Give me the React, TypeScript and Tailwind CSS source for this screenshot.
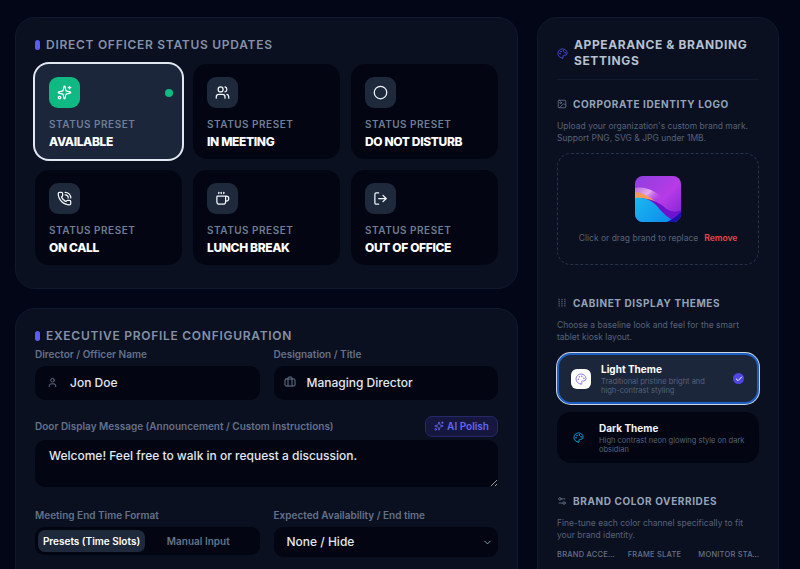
import {
  Briefcase,
  Check,
  ChevronDown,
  Circle,
  Coffee,
  Image,
  LogOut,
  Palette,
  PhoneCall,
  Settings2,
  Sparkles,
  User,
  Users,
} from "lucide-react";

const presets = [
  { title: "AVAILABLE", icon: Sparkles, active: true },
  { title: "IN MEETING", icon: Users },
  { title: "DO NOT DISTURB", icon: Circle },
  { title: "ON CALL", icon: PhoneCall },
  { title: "LUNCH BREAK", icon: Coffee },
  { title: "OUT OF OFFICE", icon: LogOut },
];

function PanelHeading({ children }: { children: string }) {
  return (
    <div className="flex items-center gap-1.5">
      <span className="h-[10px] w-[5px] rounded-full bg-[#5b5bf6]" />
      <h2 className="text-[12px] leading-4 font-semibold tracking-[0.06em] text-[#8491a8]">{children}</h2>
    </div>
  );
}

function FieldLabel({ children }: { children: string }) {
  return <label className="block text-[10px] leading-[14px] font-semibold text-[#64718a]">{children}</label>;
}

function SectionHeading({ icon, children }: { icon: React.ReactNode; children: string }) {
  return (
    <div className="flex items-center gap-[6px]">
      {icon}
      <h3 className="text-[10px] leading-[14px] font-bold tracking-[0.06em] text-[#94a3b8]">{children}</h3>
    </div>
  );
}

function ThemeIcon() {
  return (
    <svg viewBox="0 0 24 24" className="h-[10px] w-[10px] text-[#64748b]" fill="none" stroke="currentColor" strokeWidth="2.4" strokeDasharray="3 1.6">
      <path d="M5 2v20M12 2v20M19 2v20" />
    </svg>
  );
}

function BrandMark() {
  return (
    <svg viewBox="0 0 46 46" className="h-[46px] w-[46px] rounded-[8px]">
      <defs>
        <linearGradient id="mark-sky" x1="0" y1="0" x2="1" y2="1">
          <stop offset="0" stopColor="#8e3fe0" />
          <stop offset="0.55" stopColor="#b63be6" />
          <stop offset="1" stopColor="#7b1fd6" />
        </linearGradient>
        <linearGradient id="mark-glow" x1="0" y1="0" x2="1" y2="0.4">
          <stop offset="0" stopColor="#f2b7d8" stopOpacity="0.4" />
          <stop offset="0.5" stopColor="#f4c9ec" stopOpacity="0.8" />
          <stop offset="1" stopColor="#c24bea" stopOpacity="0" />
        </linearGradient>
        <linearGradient id="mark-water" x1="0" y1="0" x2="1" y2="0.6">
          <stop offset="0" stopColor="#1cb8f2" />
          <stop offset="1" stopColor="#0c8fea" />
        </linearGradient>
      </defs>
      <rect width="46" height="46" fill="url(#mark-sky)" />
      <path d="M0 12C12 10 20 16 32 24C24 24 14 22 0 22Z" fill="url(#mark-glow)" />
      <path d="M0 16C8 17 16 21 22 27C14 27 6 24 0 24Z" fill="#f59a5a" />
      <path d="M0 22C12 22 20 24 28 30C34 36 40 37 46 34V46H0Z" fill="#6d13cf" />
      <path d="M0 22C10 21 16 24 22 30C28 38 34 42 40 46H0Z" fill="url(#mark-water)" />
      <path d="M32 46C38 43 42 40 46 36V46Z" fill="#1a0fb0" />
    </svg>
  );
}

export default function App() {
  return (
    <div className="flex h-[569px] w-[800px] items-start gap-[19px] overflow-hidden bg-[#020617] pt-[17px] pl-[15px] font-['Inter',sans-serif]">
      <div className="flex w-[503px] shrink-0 flex-col gap-[19px]">
        {/* Status presets */}
        <section className="h-[272px] rounded-[20px] border border-[#101a2c] bg-[#0a1020] px-[19px] pt-[19px]">
          <PanelHeading>DIRECT OFFICER STATUS UPDATES</PanelHeading>
          <div className="mt-[11px] grid grid-cols-3 gap-x-[11px] gap-y-[11px]">
            {presets.map((preset) => {
              const Icon = preset.icon;
              return (
                <div
                  key={preset.title}
                  className={
                    preset.active
                      ? "h-[95px] rounded-[14px] bg-[#1b263b] p-[14px] pt-[13px] ring-2 ring-[#e2e8f0]"
                      : "h-[95px] rounded-[14px] bg-[#030612] p-[14px] pt-[13px]"
                  }
                >
                  <div className="flex items-center justify-between">
                    <div
                      className={
                        preset.active
                          ? "flex h-[31px] w-[31px] items-center justify-center rounded-[9px] bg-[#10b981] text-white"
                          : "flex h-[31px] w-[31px] items-center justify-center rounded-[9px] bg-[#1e293b] text-[#f1f5f9]"
                      }
                    >
                      <Icon size={15} strokeWidth={2} />
                    </div>
                    {preset.active && <span className="-mr-[5px] h-[8px] w-[8px] rounded-full bg-[#10b981]" />}
                  </div>
                  <div className="mt-[9px] text-[10px] leading-[14px] font-semibold tracking-[0.05em] text-[#6f7d95]">STATUS PRESET</div>
                  <div className="mt-[3px] text-[12px] leading-4 font-extrabold tracking-[-0.03em] text-white">{preset.title}</div>
                </div>
              );
            })}
          </div>
        </section>

        {/* Profile form */}
        <section className="h-[300px] rounded-[20px] border border-[#101a2c] bg-[#0a1020] px-[19px] pt-[19px]">
          <PanelHeading>EXECUTIVE PROFILE CONFIGURATION</PanelHeading>
          <div className="mt-[1px] grid grid-cols-2 gap-x-[14px]">
            <div>
              <div className="pt-[2px]">
                <FieldLabel>Director / Officer Name</FieldLabel>
              </div>
              <div className="mt-[5px] flex h-[34px] items-center rounded-[10px] bg-[#030612] pl-[12px] text-[12px] font-medium text-[#e2e8f0]">
                <User size={11} className="mr-[12px] -translate-y-[1px] text-[#64748b]" />
                Jon Doe
              </div>
            </div>
            <div>
              <div className="pt-[2px]">
                <FieldLabel>Designation / Title</FieldLabel>
              </div>
              <div className="mt-[5px] flex h-[34px] items-center rounded-[10px] bg-[#030612] pl-[10px] text-[12px] font-medium text-[#e2e8f0]">
                <Briefcase size={12} className="mr-[11px] -translate-y-[1px] text-[#64748b]" />
                Managing Director
              </div>
            </div>
          </div>

          <div className="mt-[15px] flex h-[22px] items-center justify-between">
            <FieldLabel>Door Display Message (Announcement / Custom instructions)</FieldLabel>
            <button className="flex h-[21px] items-center gap-[3px] rounded-[7px] border border-[#27276b] bg-[#15173f] px-[8px] text-[10px] font-semibold text-[#6366f1]">
              <Sparkles size={10} />
              AI Polish
            </button>
          </div>
          <textarea
            readOnly
            value="Welcome! Feel free to walk in or request a discussion."
            className="mt-[3px] block h-[47px] w-full rounded-[10px] bg-[#030612] px-[14px] py-[8px] text-[12px] leading-4 font-medium text-[#e2e8f0] outline-none"
          />

          <div className="mt-[21px] grid grid-cols-2 gap-x-[14px]">
            <div>
              <FieldLabel>Meeting End Time Format</FieldLabel>
              <div className="mt-[5px] flex h-[28px] items-center rounded-[9px] bg-[#030612] p-[3px] text-[10px] font-semibold">
                <span className="flex h-[22px] w-[107px] items-center justify-center rounded-[7px] bg-[#1e293b] text-white">Presets (Time Slots)</span>
                <span className="flex-1 pr-[5px] text-center text-[#64748b]">Manual Input</span>
              </div>
            </div>
            <div>
              <FieldLabel>Expected Availability / End time</FieldLabel>
              <div className="mt-[5px] flex h-[30px] items-center justify-between rounded-[9px] bg-[#030612] px-[13px] pr-[3px] text-[12px] font-medium text-[#e2e8f0]">
                None / Hide
                <ChevronDown size={11} className="mr-[2px] text-[#94a3b8]" />
              </div>
            </div>
          </div>
        </section>
      </div>

      {/* Appearance */}
      <aside className="h-[600px] w-[242px] shrink-0 rounded-[20px] border border-[#101a2c] bg-[#0a1020] px-[19px] pt-[19px]">
        <div className="flex items-center gap-[6px] border-b border-[#121b2d] pb-[10px]">
          <Palette size={11} className="shrink-0 text-[#4f46e5]" />
          <h2 className="text-[12px] leading-4 font-bold tracking-[0.05em] text-[#b6c0d0]">APPEARANCE &amp; BRANDING SETTINGS</h2>
        </div>

        <div className="mt-[17px]">
          <SectionHeading icon={<Image size={10} className="text-[#64748b]" />}>CORPORATE IDENTITY LOGO</SectionHeading>
          <p className="mt-[9px] text-[8.5px] leading-3 text-[#566279]">
            Upload your organization's custom brand mark. Support PNG, SVG &amp; JPG under 1MB.
          </p>
          <div className="mt-[9px] flex h-[112px] flex-col items-center rounded-[14px] border border-dashed border-[#273349] pt-[22px]">
            <BrandMark />
            <div className="mt-[10px] flex gap-[6px] text-[8.5px] leading-3">
              <span className="text-[#566279]">Click or drag brand to replace</span>
              <span className="font-semibold text-[#ef4444]">Remove</span>
            </div>
          </div>
        </div>

        <div className="mt-[31px]">
          <SectionHeading icon={<ThemeIcon />}>CABINET DISPLAY THEMES</SectionHeading>
          <p className="mt-[9px] text-[8.5px] leading-3 text-[#566279]">
            Choose a baseline look and feel for the smart tablet kiosk layout.
          </p>
          <div className="mt-[10px] flex items-center rounded-[14px] border-2 border-[#1d5fc4] bg-[#1b263b] py-[7px] pr-[13px] pl-[12px] shadow-[0_0_0_1px_#cbd5e1]">
            <div className="flex h-[20px] w-[20px] shrink-0 items-center justify-center rounded-[6px] bg-white text-[#8b7cf6]">
              <Palette size={12} />
            </div>
            <div className="ml-[10px] flex-1">
              <div className="text-[10px] leading-[14px] font-bold text-white">Light Theme</div>
              <div className="mt-[1px] text-[7.5px] leading-[9px] text-[#566279]">Traditional pristine bright and high-contrast styling</div>
            </div>
            <div className="ml-[12px] flex h-[11px] w-[11px] shrink-0 items-center justify-center rounded-full bg-[#4f46e5] text-white">
              <Check size={8} strokeWidth={3} />
            </div>
          </div>
          <div className="mt-[8px] flex items-center rounded-[14px] bg-[#030612] py-[9px] pr-[13px] pl-[16px]">
            <Palette size={11} className="shrink-0 text-[#0ea5e9]" />
            <div className="ml-[15px] flex-1">
              <div className="text-[10px] leading-[14px] font-bold text-[#f1f5f9]">Dark Theme</div>
              <div className="mt-[1px] text-[7.5px] leading-[9px] text-[#566279]">High contrast neon glowing style on dark obsidian</div>
            </div>
          </div>
        </div>

        <div className="mt-[31px]">
          <SectionHeading icon={<Settings2 size={10} className="text-[#64748b]" />}>BRAND COLOR OVERRIDES</SectionHeading>
          <p className="mt-[9px] text-[8.5px] leading-3 text-[#566279]">
            Fine-tune each color channel specifically to fit your brand identity.
          </p>
          <div className="mt-[9px] flex gap-[10px] text-[7.5px] leading-[10px] font-medium tracking-[0.03em] text-[#64718a]">
            <span className="w-[61px] truncate">BRAND ACCENT</span>
            <span className="w-[61px] truncate">FRAME SLATE</span>
            <span className="w-[61px] truncate">MONITOR STATUS</span>
          </div>
        </div>
      </aside>
    </div>
  );
}
